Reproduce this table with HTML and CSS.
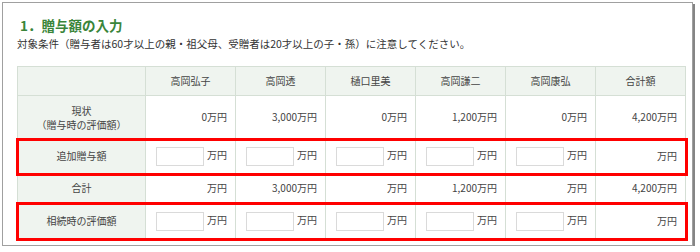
FILE: index.html
```html
<!DOCTYPE html>
<html lang="ja">
<head>
  <meta charset="UTF-8">
  <meta name="viewport" content="width=device-width, initial-scale=1.0">
  <title>贈与額の入力</title>
  <link rel="stylesheet" href="styles.css">
</head>
<body>
  <div class="panel">
    <h2 class="title">1．贈与額の入力</h2>
    <p class="note">対象条件（贈与者は60才以上の親・祖父母、受贈者は20才以上の子・孫）に注意してください。</p>

    <table class="gift">
      <colgroup>
        <col class="label-col">
        <col class="num-col">
        <col class="num-col">
        <col class="num-col">
        <col class="num-col">
        <col class="num-col">
        <col class="num-col">
      </colgroup>
      <tr class="head">
        <th></th>
        <th>高岡弘子</th>
        <th>高岡透</th>
        <th>樋口里美</th>
        <th>高岡謙二</th>
        <th>高岡康弘</th>
        <th>合計額</th>
      </tr>
      <tr class="current">
        <th>現状<br>（贈与時の評価額）</th>
        <td>0万円</td>
        <td>3,000万円</td>
        <td>0万円</td>
        <td>1,200万円</td>
        <td>0万円</td>
        <td>4,200万円</td>
      </tr>
      <tr class="entry add">
        <th>追加贈与額</th>
        <td><input type="text">万円</td>
        <td><input type="text">万円</td>
        <td><input type="text">万円</td>
        <td><input type="text">万円</td>
        <td><input type="text">万円</td>
        <td>万円</td>
      </tr>
      <tr class="sum">
        <th>合計</th>
        <td>万円</td>
        <td>3,000万円</td>
        <td>万円</td>
        <td>1,200万円</td>
        <td>万円</td>
        <td>4,200万円</td>
      </tr>
      <tr class="entry later">
        <th>相続時の評価額</th>
        <td><input type="text">万円</td>
        <td><input type="text">万円</td>
        <td><input type="text">万円</td>
        <td><input type="text">万円</td>
        <td><input type="text">万円</td>
        <td>万円</td>
      </tr>
    </table>
  </div>
</body>
</html>
```

FILE: styles.css
```css
body {
  margin: 0;
  background: #fff;
  font-family: "Noto Sans CJK JP", "Noto Sans", sans-serif;
  color: #444;
}
.panel {
  margin: 2px 0 0 2px;
  width: 691px;
  height: 244px;
  box-sizing: border-box;
  border: 1px solid #a0a0a0;
  box-shadow: 2px 2px 0 #858585;
  padding: 0 0 0 14px;
}
.title {
  margin: 12px 0 0 0;
  padding-left: 3px;
  font-size: 13.5px;
  line-height: 20px;
  font-weight: bold;
  color: #3a853a;
}
.note {
  margin: 1px 0 0 0;
  font-size: 10.5px;
  line-height: 16px;
  color: #333;
}
.gift {
  margin-top: 14px;
  border-collapse: collapse;
  width: 668px;
  table-layout: fixed;
  font-size: 10px;
}
.label-col {
  width: 128px;
}
.num-col {
  width: 90px;
}
.gift th,
.gift td {
  border: 1px solid #d5dfd5;
  padding: 0 8px 0 2px;
  font-weight: normal;
  line-height: 12.5px;
}
.gift th {
  text-align: center;
  background: #eff4ef;
  padding: 0 2px;
}
.gift td {
  text-align: right;
  white-space: nowrap;
}
.head th { height: 28px; }
.current th,
.current td { height: 43px; }
.current th {
  line-height: 14px;
}
.add th,
.add td { height: 33px; }
.sum th,
.sum td { height: 29px; }
.later th,
.later td { height: 34px; }
.entry {
  outline: 3px solid #f00;
  outline-offset: -1px;
}
.gift input {
  width: 48px;
  height: 19px;
  box-sizing: border-box;
  border: 1px solid #dadada;
  margin: 0 3px 0 0;
  padding: 0;
  vertical-align: middle;
}
```
